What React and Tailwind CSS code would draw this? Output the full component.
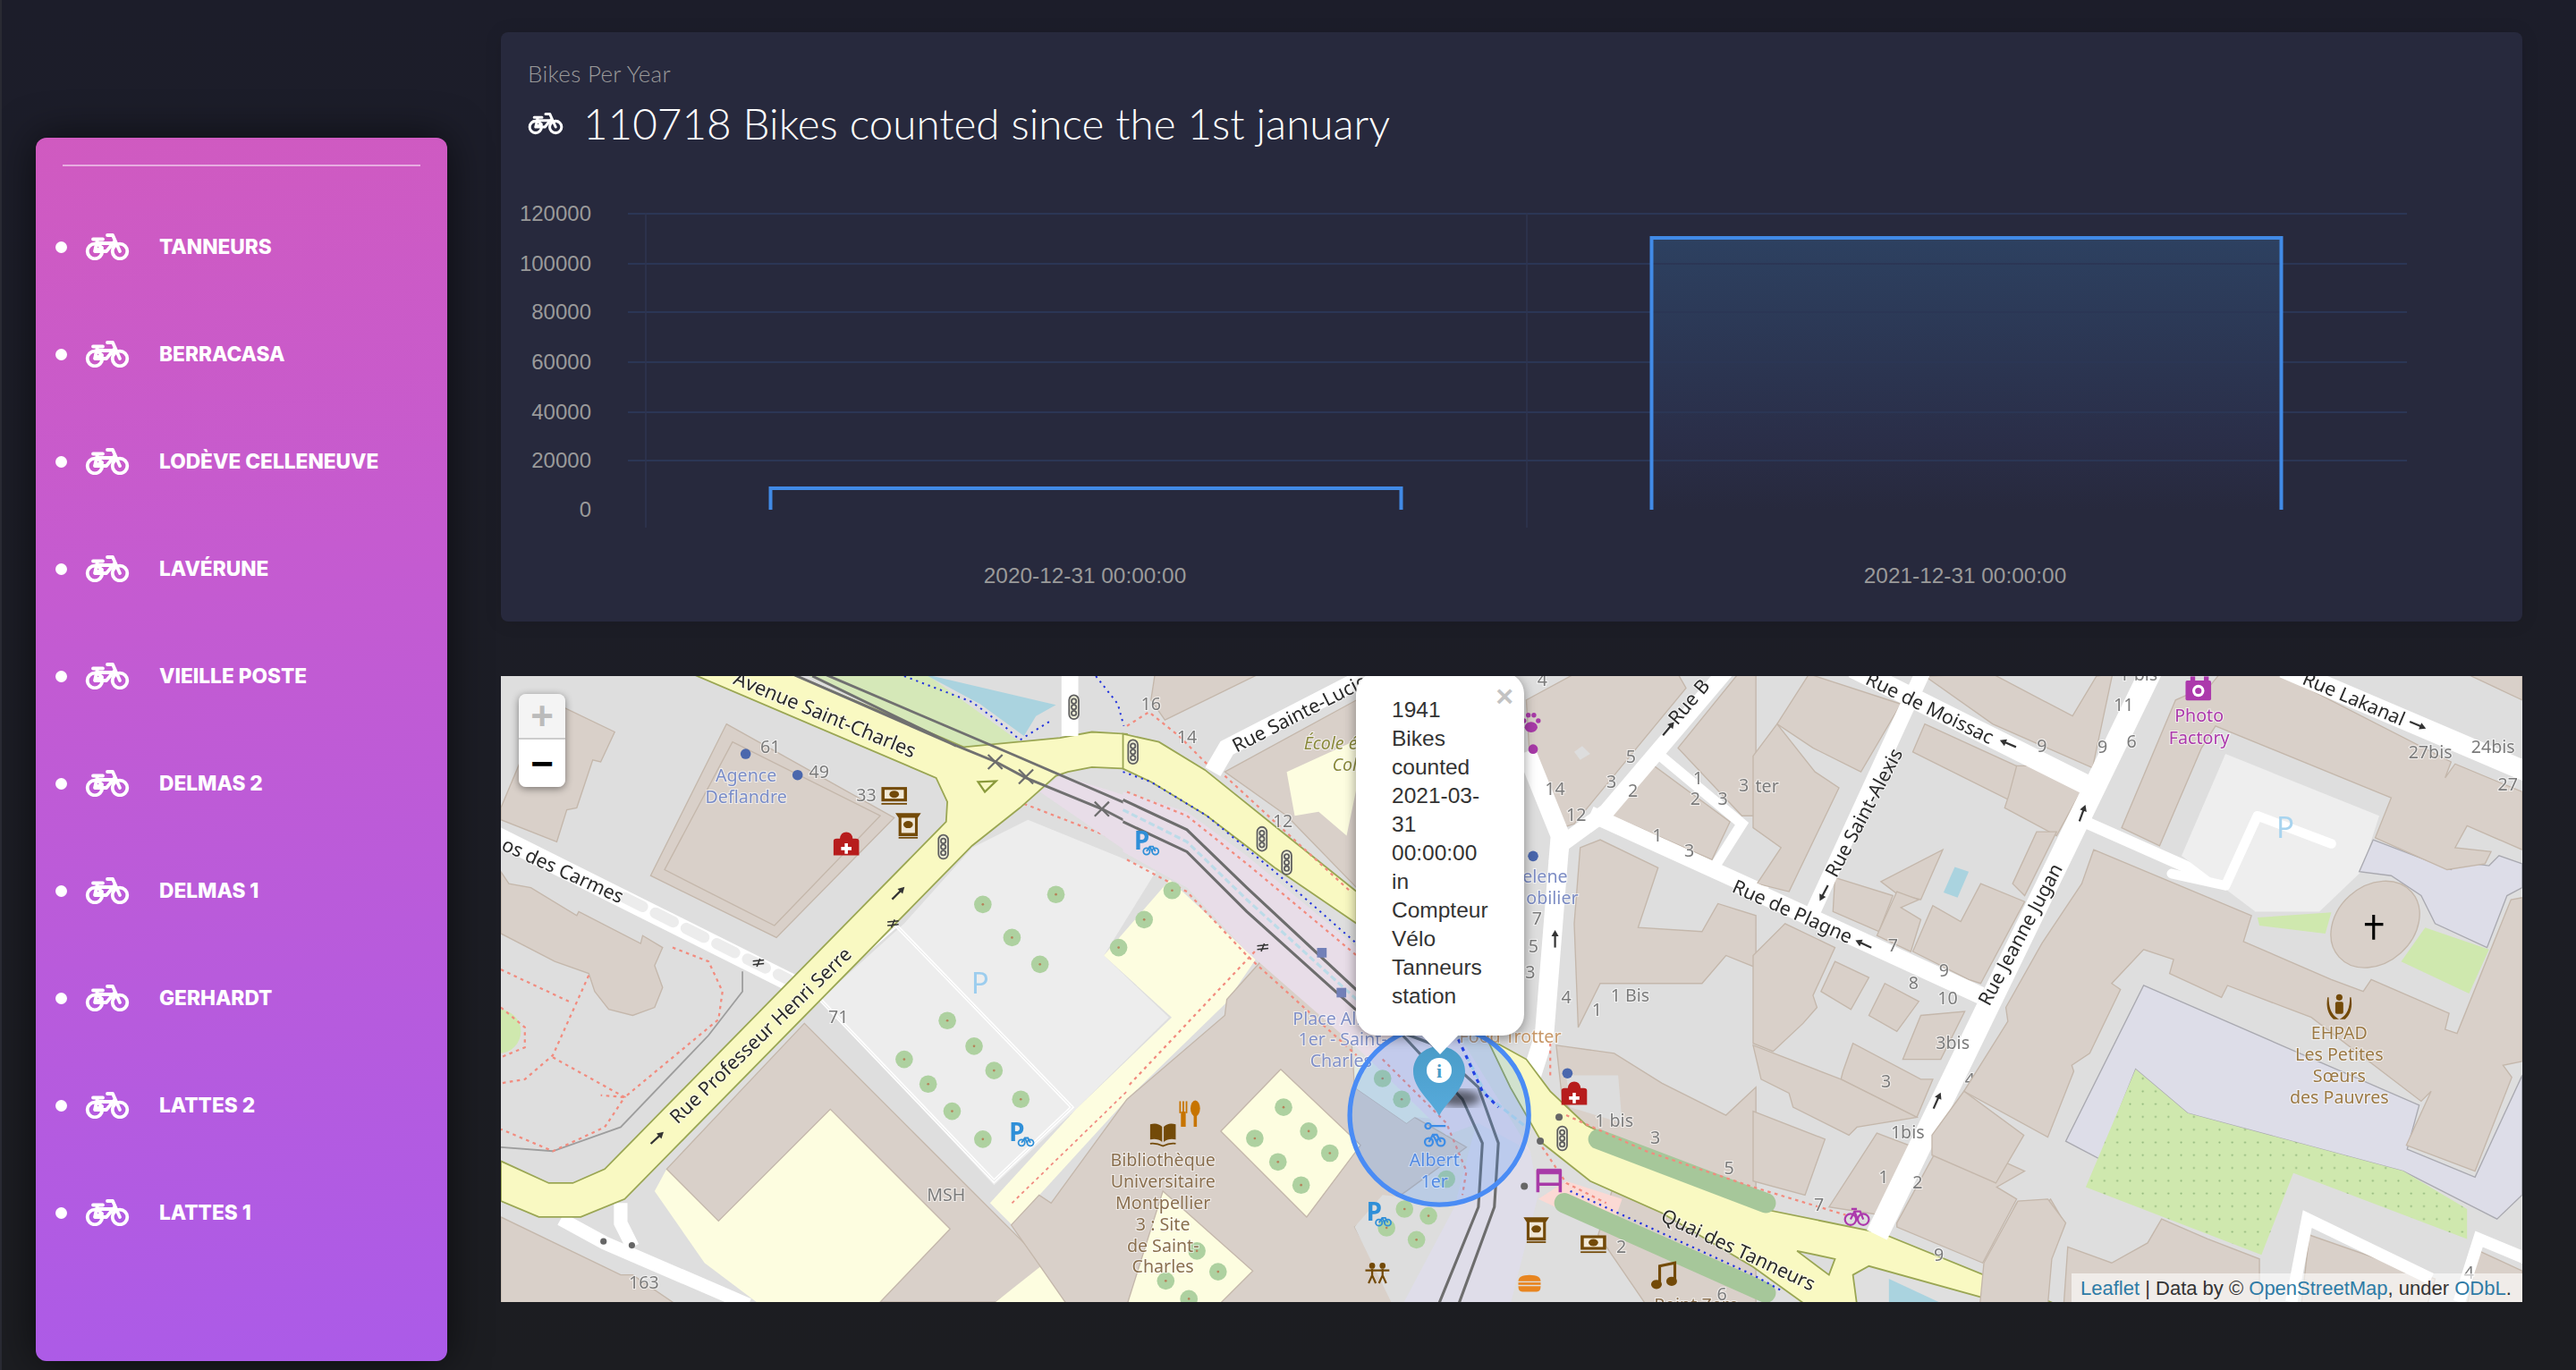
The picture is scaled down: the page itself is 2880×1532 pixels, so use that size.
const stations = ["TANNEURS", "BERRACASA", "LODÈVE CELLENEUVE", "LAVÉRUNE", "VIEILLE POSTE", "DELMAS 2", "DELMAS 1", "GERHARDT", "LATTES 2", "LATTES 1"];

const BUILDING = "#d9d0c9";
const EDGE = "#c4b7ab";
const PALE = "#fdfde0";
const ROAD = "#f9f9c2";
const CASING = "#9aa653";
const LEAF = "#aed1a0";

function Bike({ className }) {
  return (
    <svg viewBox="0 0 50 30" className={className} fill="none" stroke="currentColor" strokeWidth="3.8" strokeLinecap="round" strokeLinejoin="round">
      <circle cx="11" cy="20" r="8.3" />
      <circle cx="39" cy="20" r="8.3" />
      <path d="M9 6.5h11M14 7l-3 13h13l9-11M15 11h18M25 2h6l8 18M11 20l8-4" />
    </svg>
  );
}

function Tree({ x, y }) {
  return (
    <g>
      <circle cx={x} cy={y} r="22" fill={LEAF} />
      <circle cx={x} cy={y} r="3" fill="#b6825a" />
    </g>
  );
}

function Light({ x, y, r = 0 }) {
  return (
    <g transform={`translate(${x} ${y}) rotate(${r})`} fill="none" stroke="#5f5f5f" strokeWidth="4">
      <rect x="-12" y="-30" width="24" height="60" rx="12" fill="#efefd8" />
      <circle cy="-15" r="6" />
      <circle r="6" />
      <circle cy="15" r="6" />
    </g>
  );
}

function Cross({ x, y }) {
  return <path d={`M${x - 18} ${y - 18}l36 36M${x + 18} ${y - 18}l-36 36`} stroke="#6c6c6c" strokeWidth="5" fill="none" />;
}

function Barrier({ x, y }) {
  return <path d={`M${x - 14} ${y - 4}l28 -3M${x - 14} ${y + 5}l28 -3M${x + 4} ${y - 10}l-8 20`} stroke="#333" strokeWidth="3.5" fill="none" />;
}

function Arrow({ x, y, r }) {
  return (
    <g transform={`translate(${x} ${y}) rotate(${r})`}>
      <path d="M-20 0H12" stroke="#333" strokeWidth="5" />
      <path d="M8 -9L24 0L8 9Z" fill="#333" />
    </g>
  );
}

function Health({ x, y }) {
  return (
    <g transform={`translate(${x} ${y})`}>
      <path d="M-32 24v-36q0-6 8-6h8q2-16 16-16t16 16h8q8 0 8 6v36z" fill="#b71c1c" />
      <path d="M-4 -6h8v9h9v8h-9v9h-8v-9h-9v-8h9z" fill="#fff" />
    </g>
  );
}

function BankNote({ x, y }) {
  return (
    <g transform={`translate(${x} ${y})`}>
      <rect x="-32" y="-22" width="64" height="36" fill="#734a08" />
      <rect x="-24" y="-15" width="48" height="22" fill="#f2ead8" />
      <ellipse cy="-4" rx="12" ry="9" fill="#734a08" />
      <path d="M-32 20h64" stroke="#734a08" strokeWidth="4" />
    </g>
  );
}

function Atm({ x, y }) {
  return (
    <g transform={`translate(${x} ${y})`}>
      <path d="M-32 -32h64l-8 12v46h-48v-46z" fill="#734a08" />
      <rect x="-17" y="-20" width="34" height="38" fill="#efe6d6" />
      <ellipse cy="-3" rx="12" ry="9" fill="#734a08" />
      <path d="M-24 30h48" stroke="#734a08" strokeWidth="4" />
    </g>
  );
}

function ParkBike({ x, y }) {
  return (
    <g transform={`translate(${x} ${y})`}>
      <text x="-22" y="20" fontSize="62" fontWeight="700" fill="#2f8fd8" fontFamily="Noto Sans, sans-serif">P</text>
      <g transform="translate(14 18)" fill="none" stroke="#2f8fd8" strokeWidth="4">
        <circle cx="-5" cy="6" r="8" />
        <circle cx="17" cy="6" r="8" />
        <path d="M-5 6l8-12h8l6 12M3 -6l6 12" />
      </g>
    </g>
  );
}

function Label({ x, y, r, size = 44, fill = "#7b7b7b", children, anchor = "middle", style = "normal", halo = true }) {
  return (
    <text
      x={x}
      y={y}
      transform={r ? `rotate(${r} ${x} ${y})` : undefined}
      fontSize={size}
      fill={fill}
      textAnchor={anchor}
      fontStyle={style}
      fontFamily="'Noto Sans', sans-serif"
      stroke={halo ? "rgba(255,255,255,0.6)" : "none"}
      strokeWidth={halo ? 5 : 0}
      paintOrder="stroke"
    >
      {children}
    </text>
  );
}

function Numbers({ items }) {
  return items.map(([t, x, y]) => (
    <Label key={`${t}-${x}-${y}`} x={x} y={y}>
      {t}
    </Label>
  ));
}

function Trees({ items }) {
  return items.map(([x, y]) => <Tree key={`${x}-${y}`} x={x} y={y} />);
}

function Blocks({ items }) {
  return items.map((p, i) => <polygon key={i} points={p} fill={BUILDING} stroke={EDGE} strokeWidth="3" />);
}

function PanelA() {
  return (
    <g>
      <polygon points="760,-5 1065,-5 1300,165 1160,180" fill="#d5e8b8" />
      <polygon points="1060,-5 1390,72 1340,100 1310,150 1200,70" fill="#aad3df" />
      <polygon points="1180,430 1320,360 1640,490 1510,700 1673,855 1440,1085 1235,1275 800,810 1010,620" fill="#ededed" />
      <polygon points="1510,700 1675,510 1890,710 1815,820 1568,1060 1280,1375 1225,1320 1440,1085 1680,855" fill={PALE} />
      <path d="M1280 1320L1568 1040" stroke="#f08a80" strokeWidth="4" strokeDasharray="8 9" fill="none" />
      <polygon points="415,1235 385,1290 510,1470 640,1568 960,1568 1125,1385 825,1085 545,1365" fill={PALE} />
      <polygon points="415,1235 760,870 1340,1450 1360,1480 1240,1568 950,1568 1125,1385 825,1085 545,1365" fill={BUILDING} stroke={EDGE} strokeWidth="3" />
      <polygon points="1350,1480 1480,1575 1230,1575" fill={PALE} />
      <polygon points="0,1355 300,1500 330,1500 440,1575 0,1575" fill={BUILDING} stroke={EDGE} strokeWidth="3" />
      <Blocks
        items={[
          "0,330 105,80 160,80 285,140 250,215 230,210 190,330 165,335 140,415 0,360",
          "565,120 985,355 690,655 375,500",
          "0,490 20,520 75,530 190,600 195,590 350,670 355,650 405,680 385,725 405,780 385,830 330,850 270,835 235,790 220,745 135,715 0,645",
        ]}
      />
      <polygon points="580,165 950,350 685,625 410,485" fill="none" stroke={EDGE} strokeWidth="3" />
      <path d="M-10 400L730 770" stroke="#fff" strokeWidth="46" />
      <path d="M310 555L720 760" stroke="#ececec" strokeWidth="28" strokeDasharray="50 36" strokeLinecap="round" />
      <path d="M150 1360L260 1420L620 1575M300 1320V1370L330 1430" stroke="#fff" strokeWidth="34" fill="none" />
      <polygon points="990,625 1430,1080 1235,1265 790,800" fill="none" stroke="#fff" strokeWidth="9" />
      <polygon points="990,625 1430,1080 1235,1265 790,800" fill="none" stroke="#c9c9c9" strokeWidth="1" />
      <path d="M605 740V790L520 900L300 1130L130 1190L0 1180" stroke="#9d9d9d" strokeWidth="4" fill="none" />
      <circle cx="-5" cy="890" r="55" fill="#cfe8ae" />
      <g stroke="#f28b7e" strokeWidth="5" strokeDasharray="8 10" fill="none">
        <path d="M430 680L520 715L555 790L545 860L310 1055L250 1050" />
        <path d="M0 735L170 815" />
        <path d="M220 750L130 950L60 1010L0 1020" />
        <path d="M130 955L310 1055L260 1130L130 1190L0 1135" />
        <path d="M0 830L60 880V930L0 955" />
        <path d="M1310 320L1568 420" />
      </g>
      <polygon
        points="0,1215 120,1270 180,1270 260,1235 1115,365 1118,315 1090,255 480,-5 730,-5 1160,178 1400,155 1480,140 1568,145 1568,232 1480,228 1420,240 1390,250 1300,330 1180,425 310,1310 200,1355 95,1355 0,1315"
        fill={ROAD}
        stroke={CASING}
        strokeWidth="4"
      />
      <polygon points="1350,290 1400,248 1568,300 1568,440" fill="#e8dde8" />
      <path d="M730 -5L1130 170L1240 215L1315 255L1510 335L1568 365M810 -5L1290 200L1568 320M780 0L1140 175" stroke="#707070" strokeWidth="6.5" fill="none" />
      <path d="M1010 0L1180 65L1260 125L1300 160L1380 110M1490 0L1545 70L1560 125" stroke="#2233dd" strokeWidth="4.5" strokeDasharray="5 11" fill="none" />
      <Cross x={1238} y={215} />
      <Cross x={1315} y={252} />
      <Cross x={1505} y={333} />
      <polygon points="1195,265 1240,263 1212,290" fill="none" stroke="#8a9a3c" strokeWidth="5" />
      <Trees items={[[1207, 572], [1390, 547], [1280, 655], [1350, 722], [1118, 863], [1185, 927], [1235, 988], [1010, 960], [1070, 1022], [1130, 1090], [1302, 1060], [1207, 1160], [1547, 680]]} />
      <path d="M1425 -5V150" stroke="#fff" strokeWidth="42" />
      <Light x={1108} y={428} />
      <Light x={1435} y={78} />
      <Health x={865} y={425} />
      <BankNote x={985} y={300} />
      <Atm x={1020} y={375} />
      <Barrier x={645} y={718} />
      <Barrier x={982} y={620} />
      <Arrow x={994} y={545} r={-45} />
      <Arrow x={390} y={1158} r={-43} />
      <ParkBike x={1295} y={1145} />
      <circle cx="613" cy="195" r="13" fill="#4a67ad" />
      <circle cx="743" cy="248" r="13" fill="#4a67ad" />
      <circle cx="257" cy="1416" r="8" fill="#666" />
      <circle cx="328" cy="1426" r="8" fill="#666" />
      <Label x={614} y={264} fill="#7a8dc8">Agence</Label>
      <Label x={614} y={317} fill="#7a8dc8">Deflandre</Label>
      <Numbers items={[["61", 675, 192], ["49", 797, 255], ["33", 915, 313], ["71", 845, 870], ["MSH", 1115, 1315], ["163", 358, 1535]]} />
      <text x="1200" y="795" fontSize="74" fill="#9ccdee" textAnchor="middle" fontFamily="'Noto Sans', sans-serif">P</text>
      <Label x={805} y={112} r={22.5} fill="#2b2b2b" size={49}>Avenue Saint-Charles</Label>
      <Label x={148} y={502} r={24.5} fill="#2b2b2b" size={48}>os des Carmes</Label>
      <Label x={662} y={912} r={-44} fill="#2b2b2b" size={48}>Rue Professeur Henri Serre</Label>
    </g>
  );
}

function PanelB() {
  return (
    <g>
      <Blocks
        items={[
          "60,60 70,-5 330,-5 95,110",
          "245,240 575,60 575,530 400,350",
          "-290,1375 -220,1300 -190,1320 0,1060 245,850 250,810 335,715 420,780 480,800 560,880 570,1030 700,1120 720,1105 850,1180 700,1290 570,1380 680,1575 -150,1575 -230,1460",
          "1000,60 1120,-5 1380,-5 1400,30 1120,370 1090,380 1010,230",
          "1215,350 1320,225 1510,365 1465,460",
          "1380,180 1530,-5 1575,-5 1575,350 1540,350",
          "1135,430 1185,410 1330,480 1280,630 1440,640 1480,570 1575,600 1575,730 1500,700 1440,770 1185,770 1130,880 1120,620",
          "1075,925 1220,945 1340,1020 1500,1100 1575,1030 1575,1575 1300,1575 1180,1400 1230,1240 1090,1060",
        ]}
      />
      <polygon points="400,240 575,160 575,280 550,400 480,340 420,350" fill={PALE} />
      <polygon points="1100,1000 1230,1000 1240,1120 1110,1080" fill="#ddd" />
      <polygon points="1120,190 1140,175 1160,195 1135,210" fill="#ddd" />
      <polygon points="385,985 585,1175 450,1355 235,1140" fill={PALE} stroke={EDGE} strokeWidth="3" />
      <polygon points="90,1290 315,1490 230,1575 0,1575" fill={PALE} stroke={EDGE} strokeWidth="3" />
      <polygon points="570,1380 640,1300 830,1320 700,1575 665,1575" fill="#ddd" />
      <polygon points="570,960 640,960 790,1110 720,1105 700,1120 570,1030" fill="#e4ece2" />
      <polygon points="880,1100 1010,1190 1030,1300 960,1575 690,1575 820,1330" fill="#dfdde9" />
      <polygon points="1030,1310 1100,1265 1240,1310 1210,1395" fill="#fbd9d4" />
      <path d="M215 240L250 180L600 0" stroke="#fff" strokeWidth="44" fill="none" />
      <path d="M1075 470L1090 420L1200 340L1510 -25" stroke="#fff" strokeWidth="40" fill="none" />
      <path d="M1160 345L1600 545" stroke="#fff" strokeWidth="40" fill="none" />
      <path d="M1000 190L1085 400L1045 900L1010 1010" stroke="#fff" strokeWidth="48" fill="none" strokeLinejoin="round" />
      <path d="M1330 195L1540 370L1470 480" stroke="#fff" strokeWidth="26" fill="none" />
      <polygon points="575,540 400,400 195,235 80,165 -10,145 -10,232 60,265 200,350 370,480 575,620" fill={ROAD} stroke={CASING} strokeWidth="4" />
      <polygon points="-10,290 150,340 300,450 600,700 850,930 1010,1190 880,1120 800,1150 575,930 300,690 150,530 -10,440" fill="#e8dde8" />
      <polygon points="900,905 1000,960 1060,1040 1150,1125 1568,1330 1888,1395 2330,1575 1700,1575 1568,1480 1340,1345 1160,1265 1040,1170 960,1030" fill={ROAD} stroke={CASING} strokeWidth="4" />
      <path d="M1180 1160L1600 1320" stroke="#a6c79a" strokeWidth="50" strokeLinecap="round" fill="none" />
      <path d="M1095 1320L1600 1545" stroke="#a6c79a" strokeWidth="50" strokeLinecap="round" fill="none" />
      <path d="M-10 310L150 385L300 530L600 810L700 910L840 1060L890 1170L880 1330L780 1575M-10 365L150 440L300 590L600 860L760 920L880 1030L930 1170L920 1330L830 1575" stroke="#6d6d6d" strokeWidth="7" fill="none" />
      <path d="M-10 335L150 415L300 560L575 810" stroke="#bcdbe8" strokeWidth="7" strokeDasharray="16 8" fill="none" />
      <path d="M850 950L900 1050L1000 1130" stroke="#bcdbe8" strokeWidth="7" strokeDasharray="16 8" fill="none" />
      <g stroke="#f28b7e" strokeWidth="5" strokeDasharray="8 10" fill="none">
        <path d="M0 125L55 90L130 150L200 220" />
        <path d="M245 250L560 540" />
        <path d="M0 290L150 350L300 470L575 700" />
        <path d="M0 460L150 540L300 700L575 950" />
        <path d="M640 960L800 1120L850 1240L840 1300" />
        <path d="M1060 1000V920" />
        <path d="M1100 1100L1300 1190L1568 1280L1800 1350" />
        <path d="M1040 1180L1100 1270L1200 1320" />
        <path d="M320 690L0 1030" />
      </g>
      <path d="M-10 240L60 265L200 350L370 490L575 670" stroke="#2233dd" strokeWidth="4.5" strokeDasharray="5 11" fill="none" />
      <path d="M830 910L890 1040L930 1080" stroke="#2233dd" strokeWidth="7" strokeDasharray="10 12" fill="none" />
      <path d="M1110 1290L1568 1500L1640 1540" stroke="#2233dd" strokeWidth="5" strokeDasharray="5 11" fill="none" />
      <Trees items={[[113, 537], [43, 610], [392, 1080], [320, 1158], [455, 1140], [508, 1195], [378, 1217], [436, 1275], [175, 1440], [228, 1492], [97, 1515], [155, 1560], [640, 1008], [688, 1060], [695, 1335], [755, 1352], [650, 1382], [725, 1412], [800, 1260]]} />
      <rect x="476" y="681" width="24" height="24" fill="#7280b8" />
      <rect x="525" y="781" width="24" height="24" fill="#7280b8" />
      <Light x={15} y={190} />
      <Light x={338} y={408} />
      <Light x={400} y={467} />
      <Light x={1090} y={1158} />
      <Barrier x={340} y={680} />
      <ParkBike x={40} y={415} />
      <ParkBike x={622} y={1345} />
      <Arrow x={1072} y={660} r={-90} />
      <Arrow x={1355} y={133} r={-50} />
      <Health x={1120} y={1050} />
      <Atm x={1025} y={1388} />
      <BankNote x={1168} y={1423} />
      <circle cx="1103" cy="995" r="13" fill="#4a67ad" />
      <circle cx="1017" cy="451" r="13" fill="#4a67ad" />
      <circle cx="1035" cy="1165" r="9" fill="#666" />
      <circle cx="995" cy="1278" r="9" fill="#666" />
      <circle cx="1082" cy="1105" r="9" fill="#666" />
      <g transform="translate(1012 120)" fill="#a83aa8">
        <ellipse cy="8" rx="16" ry="13" />
        <circle cx="-18" cy="-8" r="6" />
        <circle cx="-7" cy="-22" r="6" />
        <circle cx="7" cy="-22" r="6" />
        <circle cx="18" cy="-8" r="6" />
      </g>
      <circle cx="1017" cy="183" r="12" fill="#a83aa8" />
      <g transform="translate(1057 1265)" stroke="#a83aa8" fill="none" strokeWidth="8">
        <path d="M-28 -28V28M28 -28V28M-28 8H28" />
        <path d="M-30 -30H30V-18H-30Z" fill="#a83aa8" strokeWidth="2" />
      </g>
      <g transform="translate(90 1145)" fill="#734a08">
        <path d="M-32 -22q18 -6 30 6v38q-12 -10 -30 -6zM32 -22q-18 -6 -30 6v38q12 -10 30 -6z" />
        <path d="M-32 26q16 -2 32 6q16 -8 32 -6" stroke="#734a08" strokeWidth="4" fill="none" />
      </g>
      <g transform="translate(155 1095)" fill="#c77400">
        <ellipse cx="16" cy="-12" rx="12" ry="20" />
        <rect x="12" y="0" width="8" height="34" />
        <rect x="-24" y="-30" width="4" height="30" />
        <rect x="-16" y="-30" width="4" height="30" />
        <rect x="-8" y="-30" width="4" height="30" />
        <rect x="-20" y="-4" width="12" height="38" />
      </g>
      <g transform="translate(627 1497)" stroke="#734a08" strokeWidth="5" fill="none">
        <circle cx="-13" cy="-20" r="5" fill="#734a08" />
        <circle cx="13" cy="-20" r="5" fill="#734a08" />
        <path d="M-30 -8H30M-13 -12V4L-22 24M-13 4L-4 24M13 -12V4L4 24M13 4L22 24" />
      </g>
      <g transform="translate(1008 1522)" fill="#e8851f">
        <path d="M-28 -6q0-16 28-16t28 16z" />
        <rect x="-28" y="-3" width="56" height="6" />
        <path d="M-28 6h56q0 14-10 14h-36q-10 0-10-14z" />
      </g>
      <g transform="translate(1350 1500)" stroke="#734a08" strokeWidth="7" fill="none">
        <path d="M-16 22V-22L22 -30V14" />
        <ellipse cx="-24" cy="24" rx="10" ry="8" fill="#734a08" />
        <ellipse cx="14" cy="16" rx="10" ry="8" fill="#734a08" />
      </g>
      <g transform="translate(770 1145)" stroke="#3f8ee0" fill="none" strokeWidth="5">
        <path d="M-10 -18H28" />
        <circle cx="-16" cy="-18" r="7" />
        <circle cx="-14" cy="22" r="10" />
        <circle cx="16" cy="22" r="10" />
        <path d="M-14 22L-4 4H6L16 22M-4 4L6 22" />
      </g>
      <Numbers
        items={[
          ["16", 60, 85], ["14", 150, 168], ["12", 390, 378], ["14", 1072, 298], ["12", 1125, 362], ["5", 1262, 218], ["3", 1213, 280], ["2", 1267, 303], ["1", 1430, 272], ["2", 1423, 322], ["3", 1492, 323],
          ["1", 1328, 414], ["3", 1408, 452], ["3", 1545, 290], ["7", 1027, 622], ["5", 1018, 692], ["3", 1010, 756], ["4", 1100, 820], ["1", 1177, 852], ["1 Bis", 1260, 815], ["1 bis", 1220, 1130],
          ["3", 1323, 1172], ["5", 1508, 1248], ["2", 1238, 1445], ["6", 1490, 1563], ["4", 1040, 25],
        ]}
      />
      <Label x={440} y={108} r={-27} fill="#2b2b2b" size={48}>Rue Sainte-Lucie</Label>
      <Label x={510} y={184} fill="#8a8a3c" style="italic">École é</Label>
      <Label x={545} y={238} fill="#8a8a3c" style="italic">Col</Label>
      <Label x={415} y={873} anchor="start" fill="#8090c8">Place Albert</Label>
      <Label x={540} y={926} fill="#8090c8">1er - Saint-</Label>
      <Label x={536} y={979} fill="#8090c8">Charles</Label>
      <Label x={960} y={918} fill="#c89868">Food Trotter</Label>
      <Label x={90} y={1228} fill="#8a6f4e">Bibliothèque</Label>
      <Label x={90} y={1282} fill="#8a6f4e">Universitaire</Label>
      <Label x={90} y={1335} fill="#8a6f4e">Montpellier</Label>
      <Label x={90} y={1388} fill="#8a6f4e">3 : Site</Label>
      <Label x={90} y={1442} fill="#8a6f4e">de Saint-</Label>
      <Label x={90} y={1495} fill="#8a6f4e">Charles</Label>
      <Label x={770} y={1228} fill="#5c8bdc">Albert</Label>
      <Label x={770} y={1281} fill="#5c8bdc">1er</Label>
      <Label x={1047} y={518} fill="#7c8cc4">elene</Label>
      <Label x={1065} y={571} fill="#7c8cc4">obilier</Label>
      <Label x={1420} y={75} r={-50} fill="#2b2b2b" size={48}>Rue B</Label>
      <Label x={1320} y={1590} anchor="start" fill="#8a6f4e">Point Zero</Label>
      <Label x={1524} y={1452} r={25} fill="#2b2b2b" size={48}>Quai des Tanneurs</Label>
    </g>
  );
}

function PanelC() {
  return (
    <g>
      <Blocks
        items={[
          "60,120 140,-5 370,70 270,240 150,180",
          "0,200 60,120 155,240 215,280 90,540 10,520 70,430 0,380",
          "400,190 430,120 670,230 640,310",
          "660,225 700,225 820,290 760,400 630,330 640,300",
          "650,520 710,390 760,390 680,550",
          "205,505 350,550 315,640 200,590",
          "320,515 475,435 455,480 420,560 360,545",
          "310,650 360,540 415,560 370,580 420,610 395,690",
          "400,690 450,575 520,615 570,520 680,565 570,770 540,760",
          "0,700 80,620 205,680 150,800 160,830 125,870 50,940 0,920",
          "205,715 290,755 245,835 170,790",
          "330,770 415,815 360,890 290,850",
          "225,990 250,920 420,1010 450,1010 410,1105 220,1010",
          "0,925 220,1010 410,1105 260,1130 240,1150 100,1080 90,1045 20,1010",
          "0,1090 180,1160 130,1300 0,1265",
          "190,1330 310,1145 430,1190 320,1350",
          "375,960 420,850 530,840 470,960 415,960",
          "360,1370 480,1150 680,1240 610,1280 660,1310 575,1470 360,1380",
          "580,1480 660,1320 720,1340 745,1310 780,1370 740,1460 700,1530",
          "430,0 600,-5 800,100 860,0 900,-5 850,230 600,120",
        ]}
      />
      <polygon points="505,478 540,490 512,555 477,542" fill="#aad3df" />
      <path d="M250 -20L830 270" stroke="#fff" strokeWidth="50" fill="none" />
      <path d="M430 -20L150 590" stroke="#fff" strokeWidth="38" fill="none" />
      <path d="M-40 520L570 800" stroke="#fff" strokeWidth="44" fill="none" />
      <path d="M1000 -20L310 1400" stroke="#fff" strokeWidth="56" fill="none" />
      <path d="M830 365L1180 520" stroke="#fff" strokeWidth="30" fill="none" />
      <polygon points="110,1440 205,1460 190,1500" fill="#ddd" stroke={CASING} strokeWidth="4" />
      <polygon points="250,1500 290,1478 640,1575 260,1575" fill="#dfdfdf" stroke={CASING} strokeWidth="4" />
      <polygon points="340,1510 480,1575 340,1575" fill="#aad3df" />
      <Arrow x={640} y={170} r={203} />
      <Arrow x={178} y={542} r={118} />
      <Arrow x={278} y={672} r={205} />
      <Arrow x={824} y={345} r={-70} />
      <Arrow x={460} y={1065} r={-66} />
      <g transform="translate(260 1355)" fill="none" stroke="#ac39ac" strokeWidth="5">
        <circle cx="-16" cy="6" r="14" />
        <circle cx="16" cy="6" r="14" />
        <path d="M-16 6L-6 -14H8L16 6M-6 -14L2 6M-14 -20H0" />
      </g>
      <Numbers
        items={[
          ["9", 723, 190], ["9", 875, 193], ["6", 948, 180], ["11", 928, 88], ["7", 350, 690], ["9", 478, 753], ["8", 402, 785], ["10", 487, 822], ["3bis", 500, 933], ["3", 333, 1030], ["4", 543, 1025],
          ["1bis", 387, 1158], ["1", 327, 1270], ["2", 412, 1283], ["7", 165, 1340], ["9", 465, 1465], ["11", 610, 1522], ["1 bis", 965, 12], ["ter", 35, 292],
        ]}
      />
      <Label x={435} y={95} r={26} fill="#2b2b2b" size={48}>Rue de Moissac</Label>
      <Label x={292} y={350} r={-62} fill="#2b2b2b" size={48}>Rue Saint-Alexis</Label>
      <Label x={92} y={605} r={24} fill="#2b2b2b" size={48}>Rue de Plagne</Label>
      <Label x={684} y={655} r={-62} fill="#2b2b2b" size={48}>Rue Jeanne Jugan</Label>
    </g>
  );
}

function PanelD() {
  return (
    <g>
      <polygon points="735,195 1120,350 1075,490 970,590 810,590 625,450" fill="#eeeeee" />
      <polygon points="530,775 1220,1075 1190,1185 1360,1255 1478,1000 1478,1300 1415,1360 1180,1240 640,1095 510,985 420,1210 335,1165" fill="#dddde8" stroke="#a9a9b0" strokeWidth="3" />
      <polygon points="1105,410 1300,485 1320,465 1395,475 1420,450 1478,470 1478,530 1440,550 1390,680 1260,620 1225,550 1150,500 1070,490" fill="#dddde8" stroke="#a9a9b0" strokeWidth="3" />
      <polygon points="510,985 640,1095 1180,1240 1340,1335 1340,1410 905,1245 825,1450 385,1280" fill="url(#dots)" />
      <polygon
        points="405,435 800,600 780,665 1000,760 1080,790 1100,760 1295,845 1285,885 1315,895 1450,560 1478,555 1478,965 1430,975 1452,1005 1360,1240 1188,1175 1250,1040 1225,1065 950,855 740,775 725,805 595,745 605,710 530,685 450,770 472,785 395,945 350,975 355,990 290,1155 80,1040 190,865 185,830 275,670 375,520"
        fill={BUILDING}
        stroke={EDGE}
        strokeWidth="3"
      />
      <Blocks
        items={[
          "700,20 720,-5 870,-5 1300,215 1285,255 1310,220 1478,290 1478,435 1340,375 1310,430 1400,440 1385,470 1290,485 1110,405 1150,305 710,125 675,180 570,425 475,380 610,60",
          "130,1470 215,1315 290,1310 335,1370 300,1460 290,1575 120,1575",
          "340,1430 450,1470 540,1420 575,1360 690,1410 820,1460 820,1575 330,1575",
          "945,1400 1260,1510 1240,1575 925,1575",
          "1370,1440 1478,1490 1478,1575 1340,1575",
          "0,1150 80,1040 230,1150 160,1270 0,1200",
          "1340,-5 1478,-5 1478,60",
        ]}
      />
      <ellipse cx="1110" cy="622" rx="122" ry="96" transform="rotate(-42 1110 622)" fill={BUILDING} stroke={EDGE} strokeWidth="3" />
      <polygon points="815,605 1000,592 985,645 820,625" fill="#cfe8ae" />
      <polygon points="1235,630 1395,685 1345,795 1175,715" fill="#cfe8ae" />
      <path d="M880 -20L1490 240" stroke="#fff" strokeWidth="50" fill="none" />
      <path d="M600 495L735 525L815 350L1000 420" stroke="#fff" strokeWidth="24" fill="none" strokeLinecap="round" strokeLinejoin="round" />
      <path d="M900 1568L940 1360L1250 1510" stroke="#fff" strokeWidth="30" fill="none" />
      <path d="M1320 1568L1370 1410L1490 1460" stroke="#fff" strokeWidth="30" fill="none" />
      <path d="M1106 598V660M1084 622H1130" stroke="#000" strokeWidth="7" />
      <g transform="translate(1020 830)" fill="#734a08">
        <circle cy="-25" r="8" />
        <rect x="-10" y="-14" width="20" height="30" rx="4" />
        <path d="M-28 -25Q-28 15 -6 28H-14Q-34 10 -28 -25ZM28 -25Q28 15 6 28H14Q34 10 28 -25Z" stroke="#734a08" strokeWidth="3" />
      </g>
      <g transform="translate(667 35)">
        <rect x="-32" y="-24" width="64" height="50" rx="4" fill="#ac39ac" />
        <rect x="-20" y="-34" width="12" height="12" fill="#ac39ac" />
        <rect x="14" y="-34" width="12" height="12" fill="#ac39ac" />
        <circle r="15" cy="2" fill="#fff" />
        <circle r="8" cy="2" fill="#ac39ac" />
      </g>
      <Arrow x={1215} y={122} r={23} />
      <Numbers items={[["27bis", 1248, 205], ["24bis", 1405, 193], ["27", 1442, 287], ["4", 1345, 1510]]} />
      <Label x={1050} y={72} r={23} fill="#2b2b2b" size={48}>Rue Lakanal</Label>
      <text x="885" y="405" fontSize="74" fill="#a8d4ef" textAnchor="middle" fontFamily="'Noto Sans', sans-serif">P</text>
      <Label x={669} y={115} fill="#ac39ac">Photo</Label>
      <Label x={669} y={170} fill="#ac39ac">Factory</Label>
      <Label x={1020} y={910} fill="#9c7a45">EHPAD</Label>
      <Label x={1020} y={964} fill="#9c7a45">Les Petites</Label>
      <Label x={1020} y={1017} fill="#9c7a45">Sœurs</Label>
      <Label x={1020} y={1070} fill="#9c7a45">des Pauvres</Label>
    </g>
  );
}

function OsmMap() {
  return (
    <svg viewBox="0 0 5062.4 1568" className="absolute inset-0 h-full w-full blur-[0.5px]">
      <defs>
        <pattern id="dots" width="32" height="32" patternUnits="userSpaceOnUse">
          <rect width="32" height="32" fill="#cfe8ae" />
          <circle cx="16" cy="16" r="2.4" fill="#8fb57a" />
        </pattern>
      </defs>
      <rect width="5063" height="1568" fill="#dedede" />
      <PanelA />
      <g transform="translate(1568 0)">
        <PanelB />
      </g>
      <g transform="translate(3136 0)">
        <PanelC />
      </g>
      <g transform="translate(3584 0)">
        <PanelD />
      </g>
      <circle cx="2350" cy="1100" r="224" fill="#3388ff" fillOpacity="0.2" stroke="#4a8cf5" strokeWidth="12" />
    </svg>
  );
}

function Pin() {
  return (
    <svg viewBox="0 0 60 84" className="absolute left-[1019px] top-[410px] h-[84px] w-[60px] overflow-visible">
      <defs>
        <linearGradient id="pin" x1="0" y1="0" x2="0" y2="1">
          <stop offset="0" stopColor="#4a9cc8" />
          <stop offset="1" stopColor="#57abdc" />
        </linearGradient>
        <filter id="pinblur">
          <feGaussianBlur stdDeviation="5" />
        </filter>
      </defs>
      <ellipse cx="52" cy="62" rx="24" ry="9" fill="#000" opacity="0.55" filter="url(#pinblur)" />
      <path d="M30 82C22 66 1 52 1 32C1 16 14 4 30 4S59 16 59 32C59 52 38 66 30 82Z" fill="url(#pin)" />
      <circle cx="30" cy="31" r="14" fill="#fff" />
      <text x="30" y="39" textAnchor="middle" fontSize="22" fontWeight="700" fill="#4a9cc8" fontFamily="'Liberation Serif', serif">i</text>
    </svg>
  );
}

function BarChart() {
  const ticks = [["120000", 239], ["100000", 295], ["80000", 349], ["60000", 405], ["40000", 461], ["20000", 515], ["0", 570]];
  return (
    <svg viewBox="560 200 2260 495" className="mt-auto h-[495px] w-full shrink-0">
      <defs>
        <linearGradient id="fill" x1="0" y1="0" x2="0" y2="1">
          <stop offset="0" stopColor="#2d4161" />
          <stop offset="0.75" stopColor="#2a2e48" />
          <stop offset="1" stopColor="#27293d" />
        </linearGradient>
      </defs>
      <rect x="1845" y="264" width="707" height="306" fill="url(#fill)" />
      {ticks.slice(0, 6).map(([, y]) => (
        <line key={y} x1="702" x2="2691" y1={y} y2={y} stroke="#2b3655" strokeWidth="2" />
      ))}
      <line x1="722" x2="722" y1="238" y2="590" stroke="#2f3450" strokeWidth="1.5" />
      <line x1="1707" x2="1707" y1="238" y2="590" stroke="#2f3450" strokeWidth="1.5" />
      <path d="M861.5 570V546H1566.5V570" fill="none" stroke="#418ae6" strokeWidth="4" />
      <path d="M1846.5 570V266H2550.5V570" fill="none" stroke="#418ae6" strokeWidth="4" />
      {ticks.map(([t, y]) => (
        <text key={t} x="661" y={y + 8} textAnchor="end" fontSize="24" fill="#9a9a9a" fontFamily="'Liberation Sans', sans-serif">
          {t}
        </text>
      ))}
      <text x="1213" y="652" textAnchor="middle" fontSize="24.4" fill="#9a9a9a" fontFamily="'Liberation Sans', sans-serif">2020-12-31 00:00:00</text>
      <text x="2197" y="652" textAnchor="middle" fontSize="24.4" fill="#9a9a9a" fontFamily="'Liberation Sans', sans-serif">2021-12-31 00:00:00</text>
    </svg>
  );
}

export default function App() {
  return (
    <div className="flex h-[1532px] w-[2880px] overflow-hidden border-l-2 border-[#292a33] bg-[linear-gradient(#1c1d2a,#1c1d21)] font-['Inter',sans-serif]">
      <aside className="ml-[38px] mt-[154px] flex h-[1368px] w-[460px] shrink-0 flex-col rounded-[12px] bg-[linear-gradient(172deg,#d05ac0,#c55bd0_35%,#ab5be8)] px-[30px] shadow-[0_0_45px_rgba(0,0,0,0.6)]">
        <div className="mt-[30px] h-[2px] bg-white/50" />
        <ul className="mt-[30px] flex flex-col">
          {stations.map((name) => (
            <li key={name} className="flex h-[120px] items-center text-white">
              <span className="-ml-[8px] h-[13px] w-[13px] rounded-full bg-white" />
              <Bike className="ml-[20px] h-[30px] w-[50px]" />
              <span className="ml-[33px] text-[22.7px] font-extrabold">{name}</span>
            </li>
          ))}
        </ul>
      </aside>

      <main className="ml-[60px] flex w-[2260px] shrink-0 flex-col pt-[36px]">
        <section className="flex h-[659px] flex-col rounded-[8px] bg-[#27293d] shadow-[0_1px_20px_rgba(0,0,0,0.1)]">
          <div className="px-[30px] pt-[30px]">
            <p className="text-[26px] leading-[32px] font-light tracking-[0.3px] text-[#9a9a9a] font-['Lato',sans-serif]">Bikes Per Year</p>
            <h2 className="mt-[10px] flex items-center text-[47.6px] leading-[60px] font-light text-white font-['Lato',sans-serif]">
              <Bike className="h-[26px] w-[40px]" />
              <span className="ml-[22px]">110718 Bikes counted since the 1st january</span>
            </h2>
          </div>
          <BarChart />
        </section>

        <section className="relative mt-[61px] h-[700px] overflow-hidden bg-[#dedede]">
          <OsmMap />
          <Pin />

          <div className="absolute left-[20px] top-[20px] w-[52px] overflow-hidden rounded-[8px] font-['Liberation_Sans',sans-serif] shadow-[0_2px_8px_rgba(0,0,0,0.45)]">
            <div className="flex h-[51px] items-center justify-center border-b-2 border-[#ccc] bg-[#f4f4f4] text-[44px] font-bold leading-none text-[#bbb]">+</div>
            <div className="flex h-[53px] items-center justify-center bg-white text-[44px] font-bold leading-none text-black">−</div>
          </div>

          <div className="absolute left-[956px] top-[-4px] h-[406px] w-[188px] rounded-[24px] bg-white pl-[40px] pt-[26px] font-['Liberation_Sans',sans-serif] text-[24.5px] leading-[32px] text-[#333] shadow-[0_3px_14px_rgba(0,0,0,0.4)]">
            <span className="absolute right-[12px] top-[6px] text-[34px] font-bold leading-[40px] text-[#c3c3c3]">×</span>
            <p className="w-[112px]">1941 Bikes counted 2021-03-31 00:00:00 in Compteur Vélo Tanneurs station</p>
          </div>
          <div className="absolute left-[1028px] top-[400px] h-0 w-0 border-x-[22px] border-t-[23px] border-x-transparent border-t-white" />

          <div className="absolute bottom-0 right-0 flex h-[32px] w-[504px] items-center bg-white/60 pl-[10px] font-['Liberation_Sans',sans-serif] text-[22px] text-[#333]">
            <span className="text-[#2e7ba6]">Leaflet</span>
            <span className="whitespace-pre"> | Data by © </span>
            <span className="text-[#2e7ba6]">OpenStreetMap</span>
            <span className="whitespace-pre">, under </span>
            <span className="text-[#2e7ba6]">ODbL</span>
            <span>.</span>
          </div>
        </section>
      </main>
    </div>
  );
}
